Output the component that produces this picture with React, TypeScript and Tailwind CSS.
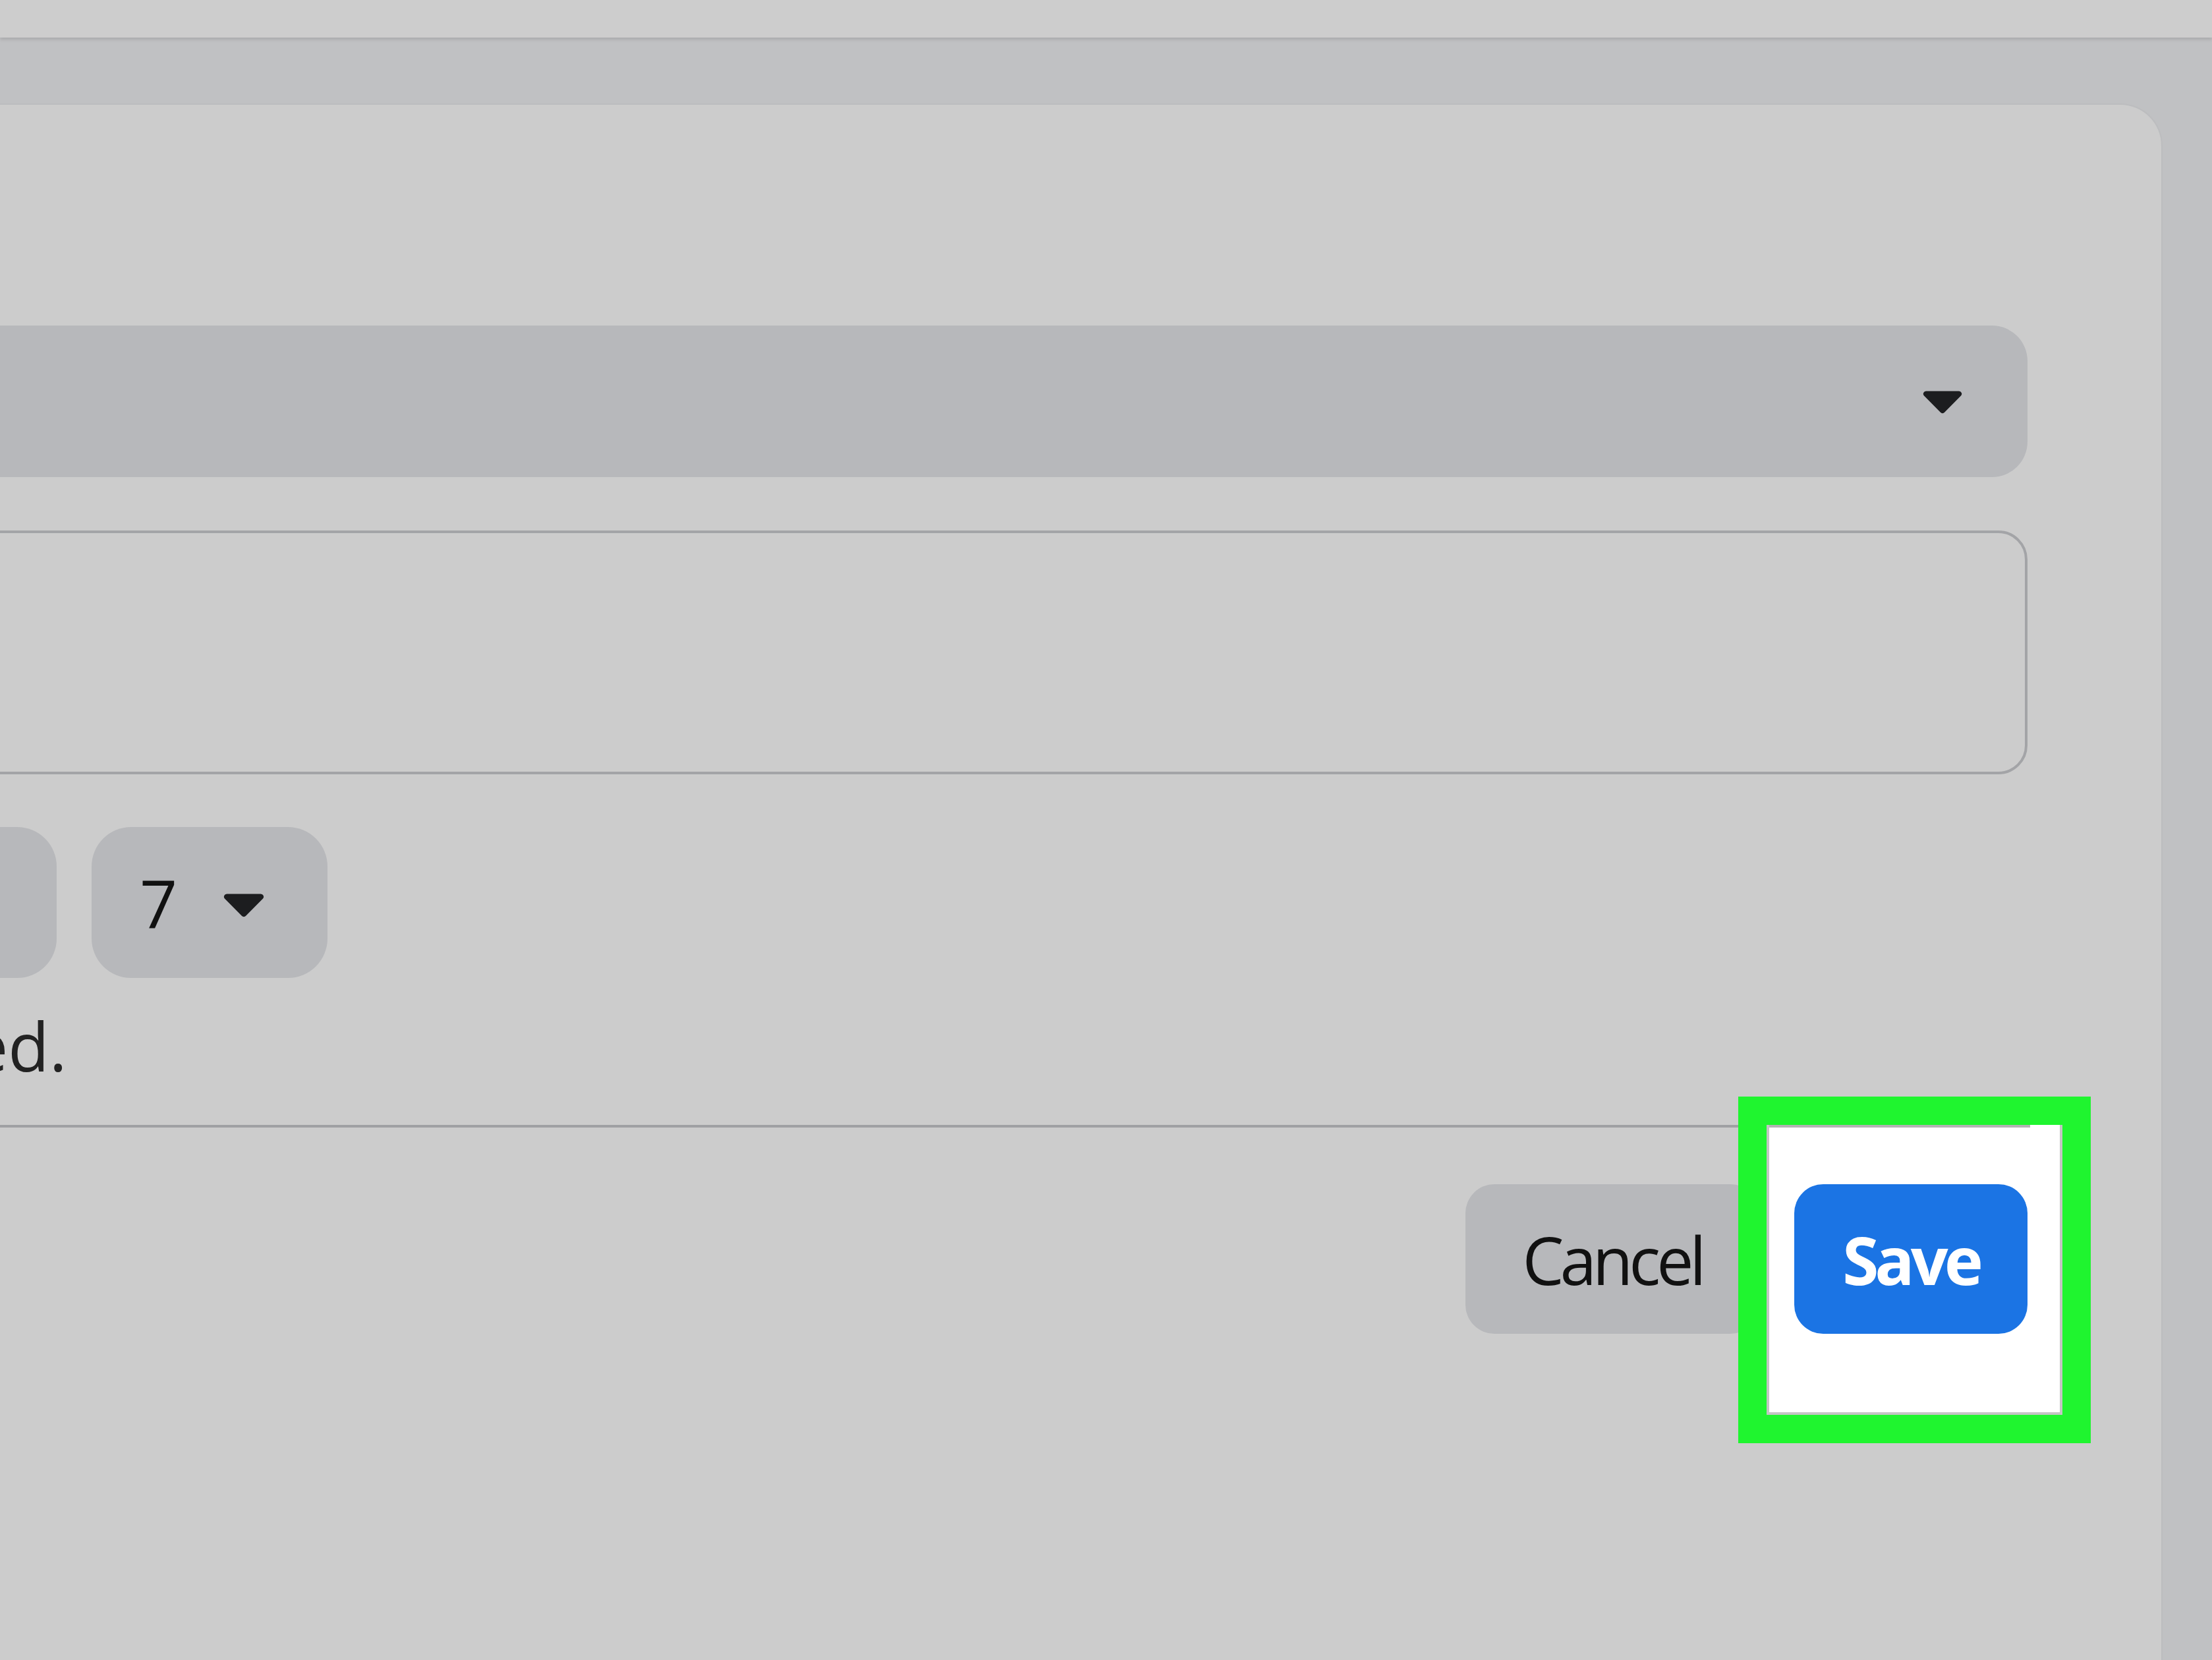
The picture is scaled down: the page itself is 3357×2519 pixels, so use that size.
import React from 'react';

function Caret({ className }: { className?: string }) {
  return (
    <svg viewBox="0 0 20 12" className={className} fill="#1c1d1f">
      <path d="M2.2 1h15.6a1.3 1.3 0 0 1 .95 2.2l-7.8 7.9a1.3 1.3 0 0 1-1.9 0L1.25 3.2A1.3 1.3 0 0 1 2.2 1z" />
    </svg>
  );
}

export default function App() {
  return (
    <div
      className="relative w-[3357px] h-[2519px] overflow-hidden bg-[#c0c1c3] text-[#111]"
      style={{ fontFamily: '"Open Sans", "Noto Sans", sans-serif' }}
    >
      {/* Browser strip */}
      <div className="h-[57px] bg-[#cdcdcd] shadow-[0_3px_5px_rgba(0,0,0,0.12)]" />
      <div className="h-[100px]" />

      {/* Dialog card */}
      <div className="relative w-[3282px] h-[2362px] bg-[#cccccc] rounded-tr-[64px] border-r-2 border-t-2 border-[#bcbdbf] pt-[335px]">
        <div className="-ml-[600px] w-[3677px] flex flex-col">
          {/* Select bar */}
          <div className="h-[230px] rounded-[54px] bg-[#b7b8bb] flex items-center justify-end pr-[97px]">
            <Caret className="w-[64px] h-[39px]" />
          </div>

          {/* Textarea */}
          <div className="mt-[81px] h-[370px] rounded-[44px] border-4 border-[#a3a4a7] bg-[#cccccc]" />

          {/* Date / time selects */}
          <div className="mt-[80px] flex gap-[53px]">
            <div className="w-[686px] h-[229px] rounded-[60px] bg-[#b7b8bb]" />
            <div className="w-[358px] h-[229px] rounded-[60px] bg-[#b7b8bb] flex items-center pl-[73px] gap-[68px]">
              <span className="text-[100px] leading-none font-medium">7</span>
              <Caret className="w-[66px] h-[40px] mt-[6px]" />
            </div>
          </div>

          <p className="mt-[48px] pl-[555px] text-[102px] leading-[110px] text-[#222]">ed.</p>

          {/* Divider */}
          <div className="mt-[65px] w-[3677px] h-[4px] bg-[#9fa0a3]" />

          {/* Footer buttons */}
          <div className="mt-[86px] flex justify-end gap-[53px]">
            <button className="w-[446px] h-[227px] rounded-[44px] bg-[#b7b8bb] flex items-center justify-center text-[100px] font-medium tracking-[-6px] leading-none">
              Cancel
            </button>
            <button className="relative z-10 w-[354px] h-[227px] rounded-[44px] bg-[#1b74e4] text-white font-bold flex items-center justify-center text-[100px] tracking-[-6px] leading-none">
              Save
            </button>
          </div>
        </div>

        {/* Highlight annotation */}
        <div className="absolute z-[5] left-[2638px] top-[1505px] w-[535px] h-[526px] border-[43px] border-[#1ff52f]">
          <div className="w-full h-full bg-white border-x-4 border-b-4 border-[#c4c4c4] flex flex-col">
            <div className="w-[396px] h-[4px] bg-[#b3b3b3]" />
          </div>
        </div>
      </div>
    </div>
  );
}
